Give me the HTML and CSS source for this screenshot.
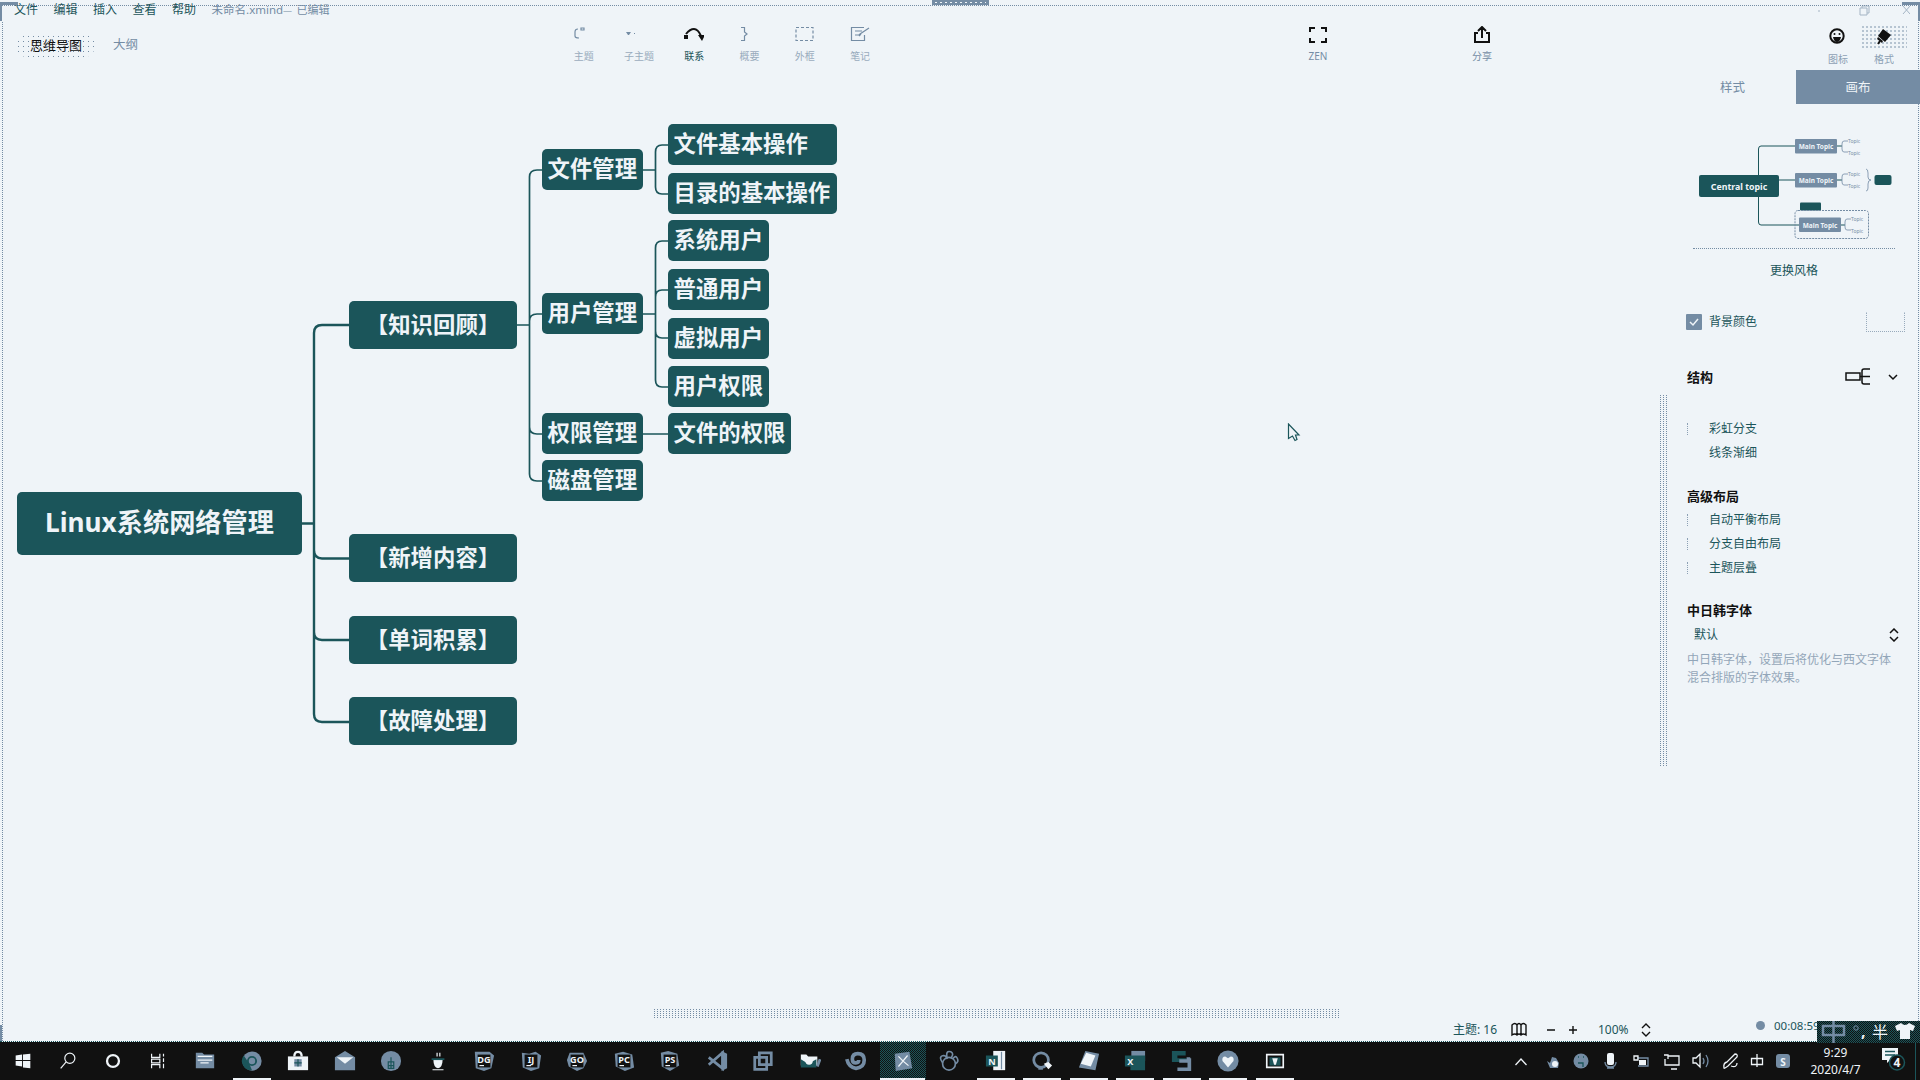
FILE: index.html
```html
<!DOCTYPE html>
<html lang="zh-CN">
<head>
<meta charset="utf-8">
<title>未命名.xmind</title>
<link rel="stylesheet" href="styles.css">
</head>
<body>
<div class="screen">
  <div class="window">
    <i class="edge edge-top"></i><i class="edge edge-left"></i><i class="edge edge-right"></i>
    <i class="corner corner-left"></i><i class="corner corner-right"></i><i class="grip"></i><i class="corner-bottom"></i>
    <header class="menubar">
      <span>文件</span><span>编辑</span><span>插入</span><span>查看</span><span>帮助</span>
      <span class="doc">未命名.xmind</span><span class="faint">—</span><span class="saved">已编辑</span>
      <svg class="winctl" width="110" height="14" viewBox="0 0 110 14"><path d="M18 7h2M60 4h7v7h-7zM62 4V2h7v7h-2M103 2l7 8M110 2l-7 8"/></svg>
    </header>
    <div class="toolbar">
      <div class="views"><span class="view active">思维导图</span><span class="view">大纲</span></div>
      <div class="tools">
        <div class="tool off"><svg width="20" height="16" viewBox="0 0 20 16"><path d="M4 3Q1 3 1 6v4q0 2 4 2M7 2h3v2H7z"/></svg><b>主题</b></div>
        <div class="tool off"><svg width="26" height="16" viewBox="0 0 26 16"><path class="solid" d="M0 6h5L3 9H2zM8 7h1v1H8z"/></svg><b>子主题</b></div>
        <div class="tool on"><svg width="20" height="16" viewBox="0 0 20 16"><path class="solid" d="M0 9h4v4H0zM14 9h7l-3 6z"/><path class="thick" d="M2 8Q6 3 10 3t7 7"/></svg><b>联系</b></div>
        <div class="tool off"><svg width="20" height="16" viewBox="0 0 20 16"><path d="M1 1.500h3.500V6L7 8 4.500 10V14.500H1"/></svg><b>概要</b></div>
        <div class="tool off"><svg width="20" height="16" viewBox="0 0 20 16"><path stroke-dasharray="3 2" d="M1 1.500h17v13H1z"/></svg><b>外框</b></div>
        <div class="tool off"><svg width="20" height="16" viewBox="0 0 20 16"><path d="M14 1.500H1.500v13h13V9M5 5h7M5 9h4l1-1 9-6M9 10l2-2"/></svg><b>笔记</b></div>
      </div>
      <div class="tool wide zen"><svg width="18" height="18" viewBox="0 0 18 18"><path class="thick" d="M1 6V2h5M12 2h5v4M17 12v4h-5M6 16H1v-4"/></svg><b>ZEN</b></div>
      <div class="tool wide share"><svg width="18" height="18" viewBox="0 0 18 18"><path class="thick" d="M5 7H2v9h14V7h-3M9 12V1M5 5l4-4 4 4"/></svg><b>分享</b></div>
      <div class="tool panelbtn"><svg width="46" height="24" viewBox="0 0 46 24"><circle cx="22" cy="11" r="6.700" class="thick"/><circle class="solid" cx="19.500" cy="9" r="1"/><circle class="solid" cx="24.500" cy="9" r="1"/><path class="solid" d="M18 12h8q-1 5-4 5t-4-5"/></svg><b>图标</b></div>
      <div class="tool panelbtn picked"><svg width="46" height="24" viewBox="0 0 46 24"><path class="solid" d="M22 4l8 6-6 7-7-6zM17 12l5 4-1 2-5-4z"/><path class="thick" d="M19 16l-2 3"/></svg><b>格式</b></div>
    </div>
    <main class="work">
      <section class="canvas">
        <svg class="links" width="860" height="700" viewBox="0 70 860 700">
          <path class="l1" d="M302 523.500H314M349 325H322Q314 325 314 333V714Q314 722 322 722H349M314 550Q314 558.500 322 558.500H349M314 632Q314 640 322 640H349"/>
          <path class="l2" d="M517 325H529.500M542 170H537Q529.500 170 529.500 177V474Q529.500 481 537 481H542M529.500 321Q529.500 314 537 314H542M529.500 427Q529.500 434 537 434H542"/>
          <path class="l2" d="M643 170H655.500M668 145H662Q655.500 145 655.500 152V187Q655.500 194 662 194H668M643 314H655.500M668 241H662Q655.500 241 655.500 248V380Q655.500 387 662 387H668M655.500 297Q655.500 290 662 290H668M655.500 331Q655.500 338 662 338H668M643 434H668"/>
        </svg>
        <div class="node root n-root">Linux系统网络管理</div>
        <div class="node main n-review">【知识回顾】</div>
        <div class="node main n-new">【新增内容】</div>
        <div class="node main n-words">【单词积累】</div>
        <div class="node main n-fault">【故障处理】</div>
        <div class="node sub n-file">文件管理</div>
        <div class="node sub n-user">用户管理</div>
        <div class="node sub n-perm">权限管理</div>
        <div class="node sub n-disk">磁盘管理</div>
        <div class="node leaf n-fileop">文件基本操作</div>
        <div class="node leaf n-dirop">目录的基本操作</div>
        <div class="node leaf n-sysuser">系统用户</div>
        <div class="node leaf n-normuser">普通用户</div>
        <div class="node leaf n-virtuser">虚拟用户</div>
        <div class="node leaf n-userperm">用户权限</div>
        <div class="node leaf n-fileperm">文件的权限</div>
        <svg class="cursor" width="14" height="20" viewBox="0 0 14 20"><path d="M1.500 1v14.500l4-2.500 2.500 4.500 2-1-1.500-4.500H12z"/></svg>
        <i class="scroll-v"></i><i class="scroll-h"></i>
      </section>
      <aside class="panel">
        <div class="tabs"><span>样式</span><span class="current">画布</span></div>
        <svg class="preview" width="206" height="110" viewBox="1690 134 206 110">
          <path class="pl" d="M1795 146H1761Q1758.500 146 1758.500 149V222Q1758.500 225 1761 225H1799M1779 180H1795M1837 146h5M1837 180h5M1841 225h4"/>
          <rect class="pt" x="1699" y="175" width="80" height="22" rx="2"/>
          <text x="1739" y="189.500" class="ptxt">Central topic</text>
          <g class="pm"><rect x="1795" y="139" width="42" height="14.500" rx="1"/><rect x="1795" y="173" width="42" height="14.500" rx="1"/><rect x="1799" y="217.500" width="42" height="14.500" rx="1"/></g>
          <text x="1816" y="149" class="pmtxt">Main Topic</text><text x="1816" y="183" class="pmtxt">Main Topic</text><text x="1820" y="227.500" class="pmtxt">Main Topic</text>
          <path class="pb" d="M1848 141h-4q-2 0-2 3v5q0 3 2 3h4M1848 174h-4q-2 0-2 3v5q0 3 2 3h4M1851 219h-4q-2 0-2 3v5q0 3 2 3h4M1866 169q2 0 2 4v4q0 3 3 3-3 0-3 4v4q0 3-2 3"/>
          <g class="ptiny"><text x="1848" y="143">Topic</text><text x="1848" y="155">Topic</text><text x="1848" y="176">Topic</text><text x="1848" y="188">Topic</text><text x="1851" y="221">Topic</text><text x="1851" y="233">Topic</text></g>
          <rect class="pt" x="1874.500" y="175" width="17" height="10" rx="2"/><rect class="pt" x="1800" y="202.500" width="21" height="8" rx="1"/>
          <rect class="pd" x="1795" y="210.500" width="73.500" height="28" rx="3"/>
        </svg>
        <div class="change">更换风格</div>
        <div class="row bg"><svg width="16" height="16" viewBox="0 0 16 16"><rect class="box" width="16" height="16" rx="1"/><path class="tick" d="M4 8l3 3 5-6"/></svg><span>背景颜色</span><i class="swatch"></i></div>
        <div class="row struct"><h3>结构</h3><svg width="60" height="18" viewBox="0 0 60 18"><path d="M1 5h14v7H1zM15 8.500H25M25 1h-6q-2 0-2 2v11q0 2 2 2h6M44 7l4 4 4-4"/></svg></div>
        <label class="opt first"><i></i>彩虹分支</label>
        <label class="opt">线条渐细</label>
        <h3 class="adv">高级布局</h3>
        <label class="opt"><i></i>自动平衡布局</label>
        <label class="opt"><i></i>分支自由布局</label>
        <label class="opt"><i></i>主题层叠</label>
        <h3 class="cjk">中日韩字体</h3>
        <div class="row select"><span>默认</span><svg width="10" height="14" viewBox="0 0 10 14"><path d="M1 5l4-4 4 4M1 9l4 4 4-4"/></svg></div>
        <p>中日韩字体，设置后将优化与西文字体混合排版的字体效果。</p>
      </aside>
    </main>
    <footer class="status">
      <span class="count">主题: 16</span>
      <svg class="map" width="16" height="15" viewBox="0 0 16 15"><path d="M1 3q3-3 5 0 2-3 4 0 2-3 5 0v10q-3-2-5 0-2-2-4 0-2-2-5 0zM6 3v10M10 3v10"/></svg>
      <svg class="zoomctl" width="32" height="12" viewBox="0 0 32 12"><path d="M1 6h8M23 6h8M27 2v8"/></svg>
      <span class="pct">100%</span>
      <svg width="10" height="14" viewBox="0 0 10 14"><path d="M1 5l4-4 4 4M1 9l4 4 4-4"/></svg>
      <i class="rec"></i><span class="timer">00:08:59</span>
    </footer>
    <div class="ime"><svg width="103" height="22" viewBox="0 0 103 22"><path class="zh" d="M6 5h21v9H6zM16.500 0v22"/><circle cx="39" cy="7" r="2.200"/><path class="shirt" d="M78 5l6-3q4 4 8 0l6 3-2 5-3-1v9H83V9l-3 1z"/></svg><span class="comma">,</span><span class="half">半</span></div>
  </div>
  <nav class="taskbar">
    <div class="sys">
      <div class="app"><svg viewBox="0 0 24 24"><path class="w" d="M4 6l7-1v6H4zM12 5l8-1v7h-8zM4 12h7v6l-7-1zM12 12h8v8l-8-1z"/></svg></div>
      <div class="app"><svg viewBox="0 0 24 24"><circle class="lw thin" cx="14" cy="9" r="5.500"/><path class="lw thin" d="M10 13l-6 7"/></svg></div>
      <div class="app"><svg viewBox="0 0 24 24"><circle class="lw" cx="12" cy="12" r="6.500"/></svg></div>
      <div class="app"><svg viewBox="0 0 24 24"><path class="lw thin" d="M5 4v4h9V4M5 20v-4h9v4M5 10h9v4H5zM18 4v3M18 9v4M18 15v5"/></svg></div>
    </div>
    <div class="apps">
      <div class="app"><svg viewBox="0 0 24 24"><path class="s" d="M2 3h7l2 2h11v15H2z"/><path class="lw thin" d="M4 7h16M4 11h16M7 14h9"/></svg></div>
      <div class="app run"><svg viewBox="0 0 24 24"><circle class="s" cx="12" cy="12" r="10.500"/><path class="t" d="M3 6l6 9 3 7A10 10 0 0 1 3 6"/><circle class="lt" cx="12" cy="12" r="4.500"/></svg></div>
      <div class="app"><svg viewBox="0 0 24 24"><path class="w" d="M1 7h22v15H1z"/><path class="lw" d="M8 7q0-5 4-5t4 5"/><path class="s" d="M8 10h8v8H8z"/><path class="lt thin" d="M12 10v8M8 14h8"/></svg></div>
      <div class="app"><svg viewBox="0 0 24 24"><path class="s" d="M1 8L12 1l11 7v14H1z"/><path class="w" d="M3 8h18l-9 7z"/></svg></div>
      <div class="app"><svg viewBox="0 0 24 24"><circle class="s" cx="12" cy="12" r="11"/><path class="lt thin" d="M9 13h6v7H9zM12 8v12M9 17h6"/></svg></div>
      <div class="app"><svg viewBox="0 0 24 24"><path class="w" d="M7 11h10q0 8-5 9-5-1-5-9zM6 21h12v1H6z"/><path class="lt" d="M5 10h14"/><path class="lw thin" d="M11 3v4M14 3v4"/></svg></div>
      <div class="app"><svg viewBox="0 0 24 24"><path class="s" d="M2 2h16l5 4-3 14-8 3-9-3z"/><path class="k" d="M5 5h14v14H5z"/><text x="12" y="14">DG</text><path class="lw thin" d="M7 17h5"/></svg></div>
      <div class="app"><svg viewBox="0 0 24 24"><path class="s" d="M2 3l8 1 7-2 6 4-2 14-9 3-9-4z"/><path class="k" d="M5 5h14v14H5z"/><text x="12" y="14">IJ</text><path class="lw thin" d="M7 17h5"/></svg></div>
      <div class="app"><svg viewBox="0 0 24 24"><path class="s" d="M4 3h15l4 9-4 8-7 3-9-5-2-7z"/><path class="k" d="M5 5h14v14H5z"/><text x="12" y="14">GO</text><path class="lw thin" d="M7 17h5"/></svg></div>
      <div class="app"><svg viewBox="0 0 24 24"><path class="s" d="M2 4l9-2 10 3 2 14-10 4-10-5z"/><path class="k" d="M5 5h14v14H5z"/><text x="12" y="14">PC</text><path class="lw thin" d="M7 17h5"/></svg></div>
      <div class="app"><svg viewBox="0 0 24 24"><path class="s" d="M2 3l8-2 10 3 2 13-10 6-9-5z"/><path class="k" d="M5 5h14v14H5z"/><text x="12" y="14">PS</text><path class="lw thin" d="M7 17h5"/></svg></div>
      <div class="app"><svg viewBox="0 0 24 24"><path class="ls" d="M3 8l15 12V3L3 16"/><path class="s" d="M17 1l6 3v16l-6 3z"/></svg></div>
      <div class="app"><svg viewBox="0 0 24 24"><path class="ls" d="M8 3h13v13H8zM3 8h13v13H3z"/></svg></div>
      <div class="app"><svg viewBox="0 0 24 24"><path class="w" d="M2 5h6l2 2h10v10H2z"/><path class="t" d="M2 10l8 5 9-5v9H2z"/><circle class="w" cx="11" cy="12" r="4"/><path class="ls" d="M23 10l-3 8"/></svg></div>
      <div class="app"><svg viewBox="0 0 24 24"><path class="ls fat" d="M2 10q2 9 10 10 9-1 9-9 0-7-7-7-6 0-6 6 0 4 4 4 3 0 3-3"/></svg></div>
      <div class="app run focus"><svg viewBox="0 0 24 24"><path class="s" d="M3 4l16-2 3 18-18 3z"/><path class="lw thin" d="M7 7l5 5 5-6M7 18l5-6 6 5"/></svg></div>
      <div class="app"><svg viewBox="0 0 24 24"><circle class="ls thin2" cx="12" cy="15" r="7"/><path class="ls thin2" d="M10 9Q8 0 14 2q4 2 0 7M5 14q-5-7 1-8 3 0 4 4M16 10q3-5 5-1t-2 6"/></svg></div>
      <div class="app run"><svg viewBox="0 0 24 24"><path class="w" d="M9 1h13v21H9z"/><path class="t" d="M1 6h13v12H1z"/><text x="7.500" y="16">N</text><path class="ls thin" d="M18 2v19"/></svg></div>
      <div class="app run"><svg viewBox="0 0 24 24"><circle class="ls" cx="11" cy="11" r="8"/><path class="w" d="M14 15l5-2 4 4-4 4z"/><path class="ls" d="M8 20h5"/></svg></div>
      <div class="app run"><svg viewBox="0 0 24 24"><path class="s" d="M8 1l15 3-4 18-18-3z"/><path class="w" d="M9 3l10 3-5 12-11-3z"/></svg></div>
      <div class="app run"><svg viewBox="0 0 24 24"><path class="s" d="M8 1h15v11H8z"/><path class="t" d="M1 6h22v16H7V18H1z"/><text x="7" y="16">X</text></svg></div>
      <div class="app run"><svg viewBox="0 0 24 24"><path class="t" d="M1 1h15v5H7v3h10v4H1z"/><path class="ls fat" d="M9 12h10V8M20 9v12H7"/></svg></div>
      <div class="app run"><svg viewBox="0 0 24 24"><circle class="s" cx="12" cy="12" r="11.500"/><path class="w" d="M12 19l-6-7q-1-5 3-5l3 2 3-2q4 0 3 5z"/></svg></div>
      <div class="app run"><svg viewBox="0 0 24 24"><path class="lw thin2" d="M3 5h18v14H3z"/><path class="t" d="M6 8h12v9H6z"/><path class="w" d="M9 9h6l-2 7h-2z"/></svg></div>
    </div>
    <div class="tray">
      <svg width="280" height="24" viewBox="1515 1049 280 24">
        <path class="lw thin" d="M1515.500 1065l5.500-6 5.500 6"/>
        <path class="s" d="M1547 1061l3 2 2-6 4 1 3 5-1 5h-8z"/><circle class="w" cx="1555" cy="1064" r="3"/>
        <circle class="s" cx="1581" cy="1061" r="7.500"/><path class="lt thin" d="M1578 1063h5v4M1578 1057h1M1583 1057h1"/>
        <rect class="w" x="1607" y="1053" width="7" height="12" rx="2"/><path class="ls thin" d="M1605 1062q0 5 5.500 5t5.500-5M1607 1068h7"/>
        <path class="ls thin" d="M1637 1058h11v8h-10"/><rect class="w" x="1639" y="1060" width="7" height="5"/><path class="lw thin" d="M1634 1056h4v4h-4z"/>
        <path class="lw thin" d="M1668 1056h11v9h-14v-6M1671 1069h6M1664 1055h4v4"/>
        <path class="lw thin" d="M1693 1058h3l4-4v13l-4-4h-3z"/><path class="ls thin" d="M1703 1058q2 3 0 6M1706 1055q4 6 0 12"/>
        <path class="lw thin" d="M1724 1068q-1-5 3-6l8-8q3 0 2 3l-9 9q-4 3-4 2M1731 1066q6 2 6-3"/>
        <path class="lw thin" d="M1751.500 1058.500h11v6h-11zM1757 1054v13"/>
        <rect class="s" x="1776" y="1054" width="14" height="14" rx="3"/><text x="1783" y="1066">S</text>
      </svg>
      <div class="clock"><span>9:29</span><span>2020/4/7</span></div>
      <svg class="notice" width="24" height="26" viewBox="0 0 24 26"><path class="w" d="M0 1h16v12H8l-3 3v-3H0z"/><path class="lt thin" d="M3 4.500h10M3 8h10"/><circle class="badge" cx="15" cy="15.500" r="7.500"/><text x="15" y="20">4</text></svg>
    </div>
  </nav>
</div>
</body>
</html>
```

FILE: styles.css
```css
:root { --bg: #eff4f8; --slate: #748ca4; --teal: #1b555a; --ink: #111; }
* { box-sizing: border-box; }
body { margin: 0; background: var(--bg); color: var(--teal); font-family: "Noto Sans", "Noto Sans CJK SC", sans-serif; font-size: 12px; line-height: 1; overflow: hidden; }
svg { display: block; flex: none; fill: none; stroke: none; }
h3, p { margin: 0; }
.screen { width: 1920px; height: 1080px; display: flex; flex-direction: column; }
.window { position: relative; height: 1042px; display: flex; flex-direction: column; border-bottom: 1px dotted var(--teal); }

/* window frame */
.edge, .corner, .grip, .corner-bottom { position: absolute; }
.edge-top { left: 0; right: 0; top: 5px; height: 1px; background: repeating-linear-gradient(90deg, var(--slate) 0 1px, transparent 1px 2px); }
.edge-left, .edge-right { top: 22px; bottom: 0; width: 1px; background: repeating-linear-gradient(var(--slate) 0 1px, transparent 1px 2px); }
.edge-left { left: 2px; }
.edge-right { right: 1px; z-index: 2; }
.corner { top: 2px; width: 18px; height: 19px; border-top: 3px solid var(--slate); }
.corner-left { left: 0; border-left: 2px solid var(--slate); }
.corner-right { right: 0; border-right: 2px solid var(--slate); }
.corner-bottom { left: 0; bottom: 0; width: 2px; height: 16px; background: var(--slate); }
.grip { left: 932px; top: 0; width: 57px; height: 5px; background: repeating-linear-gradient(90deg, var(--bg) 0 2px, transparent 2px 5px) 3px 2px / 51px 1px no-repeat var(--slate); }

.menubar { height: 20px; padding: 4px 0 0 14px; display: flex; gap: 15.500px; align-items: flex-start; white-space: nowrap; }
.menubar .doc { width: 67px; margin-right: -11px; font-size: 11.500px; }
.menubar .doc, .menubar .faint, .menubar .saved { color: var(--slate); }
.menubar .saved { margin-left: -10px; font-size: 11px; }
.menubar .faint { width: 8px; font-size: 9px; line-height: 13px; }
.menubar .winctl { margin: 0 10px 0 auto; stroke: var(--slate); opacity: .6; }

.toolbar { height: 50px; display: flex; }
.views { width: 556px; padding: 14px 0 0 16px; display: flex; gap: 18px; align-items: flex-start; font-size: 13px; }
.view { height: 23px; line-height: 22px; font-size: 12.500px; color: var(--slate); }
.view.active { width: 79px; font-size: 13px; padding-left: 14px; color: var(--ink); border-radius: 11px; background: radial-gradient(circle, var(--slate) .6px, transparent .8px) 0 0 / 5px 5px; }
.tools { display: flex; width: 332px; margin-right: 400px; }
.tool { display: flex; flex-direction: column; align-items: center; width: 55.300px; padding-top: 6px; stroke: var(--ink); }
.tool b { font-weight: 400; font-size: 10px; line-height: 12px; margin-top: 8px; color: var(--slate); stroke: none; }
.tool svg { stroke: var(--ink); stroke-width: 1.200; }
.tool.off svg { stroke: var(--slate); }
.tool.off b { opacity: .7; }
.tool.off .solid { fill: var(--slate); }
.tool.on b { color: var(--teal); }
.tool .solid { fill: var(--ink); stroke: none; }
.tool .thick { stroke-width: 2; }
.wide { width: 60px; }
.wide b { margin-top: 6px; }
.share { margin-left: 104px; margin-right: 303px; }
.panelbtn { width: 46px; padding-top: 5px; }
.panelbtn b { margin-top: 4px; opacity: .8; }
.picked svg { background: radial-gradient(circle, var(--slate) .6px, transparent .8px) 0 0 / 4px 4px; }

.work { height: 946px; display: flex; }
.canvas { position: relative; width: 1686px; }
.links { position: absolute; left: 0; top: 0; stroke: var(--teal); }
.l1 { stroke-width: 2.400; }
.l2 { stroke-width: 1.700; }
.node { position: absolute; background: var(--teal); color: var(--bg); font-weight: 700; font-size: 22.400px; height: 41px; line-height: 40px; border-radius: 5px; white-space: nowrap; }
.root { width: 285px; height: 63px; line-height: 61px; font-size: 26.200px; text-align: center; }
.main { left: 349px; width: 168px; height: 48px; line-height: 47px; text-align: center; }
.sub { left: 542px; width: 101px; padding-left: 5.500px; }
.leaf { left: 668px; width: 101px; padding-left: 5.500px; }
.n-root { left: 17px; top: 422px; }
.n-review { top: 231px; } .n-new { top: 464.500px; } .n-words { top: 546px; } .n-fault { top: 627.500px; }
.n-file { top: 79px; } .n-user { top: 223.500px; } .n-perm { top: 343.500px; } .n-disk { top: 390.500px; }
.n-fileop { top: 54.500px; width: 169px; } .n-dirop { top: 103.500px; width: 169px; }
.n-sysuser { top: 150.500px; } .n-normuser { top: 199px; } .n-virtuser { top: 248px; } .n-userperm { top: 296.500px; }
.n-fileperm { top: 343.500px; width: 123px; }
.cursor { position: absolute; left: 1287px; top: 353px; fill: var(--bg); stroke: var(--teal); stroke-width: 1.200; }
.scroll-v, .scroll-h { position: absolute; }
.scroll-v { left: 1660px; top: 325px; width: 8px; height: 371px; background: linear-gradient(var(--slate) 0 0) 0 0 / 1px 1px; background: conic-gradient(from 270deg at 1px 1px, var(--slate) 90deg, transparent 0) 0 0 / 3px 2px; }
.scroll-h { left: 654px; top: 939px; width: 685px; height: 9px; background: conic-gradient(from 270deg at 1px 1px, var(--slate) 90deg, transparent 0) 0 0 / 3px 2px; }

.panel { width: 234px; padding-right: 2px; display: flex; flex-direction: column; }
.tabs { display: flex; height: 34px; line-height: 35px; font-size: 12.500px; text-align: center; color: var(--slate); }
.tabs span { width: 92px; margin-left: 0; }
.tabs .current { width: 124px; margin-left: 18px; margin-right: -2px; background: var(--slate); color: var(--bg); }
.tabs span:first-child { padding-left: 1px; margin-left: 0; }
.preview { margin: 30px 0 0 4px; overflow: visible; }
.preview text { text-anchor: middle; font-weight: 700; fill: var(--bg); }
.preview .ptxt { font-size: 8.800px; }
.preview .pmtxt { font-size: 6.500px; }
.preview .ptiny text { font-size: 5px; font-weight: 400; text-anchor: start; fill: var(--slate); }
.pt { fill: var(--teal); } .pm { fill: var(--slate); }
.pl { stroke: var(--teal); } .pb { stroke: var(--slate); stroke-width: .8; } .pd { stroke: var(--slate); stroke-dasharray: 2 1; }
.change { margin: 4px 23px 0 7px; height: 44px; line-height: 43px; text-align: center; border-top: 1px dotted var(--slate); }
.row { display: flex; align-items: center; }
.bg { margin-top: 20px; height: 20px; padding-right: 13px; }
.bg span { margin-left: 7px; }
.box { fill: var(--slate); } .tick { stroke: var(--bg); stroke-width: 1.500; }
.swatch { margin-left: auto; width: 39px; height: 20px; border: 1px dotted var(--slate); border-top-color: transparent; opacity: .7; }
h3 { margin-left: 1px; font-size: 13px; line-height: 20px; color: var(--ink); font-weight: 600; }
.struct { height: 20px; margin-top: 35px; justify-content: space-between; padding-right: 13px; }
.struct svg { stroke: var(--ink); stroke-width: 1.500; }
.opt { position: relative; height: 24.300px; line-height: 24px; padding-left: 23px; }
.opt i { position: absolute; left: 1px; top: 6px; width: 14px; height: 12px; border-left: 1px dotted var(--slate); opacity: .8; }
.first { margin-top: 30px; }
.adv { margin-top: 20px; height: 22px; }
.cjk { margin-top: 20px; height: 22px; }
.select { height: 26px; padding: 0 19px 0 8px; justify-content: space-between; }
.select svg, .status svg { stroke: var(--ink); stroke-width: 1.500; }
.panel p { margin: 3px 0 0 1px; width: 206px; line-height: 18px; color: var(--slate); opacity: .75; }

.status { height: 26px; padding-left: 1453px; display: flex; align-items: center; padding-top: 3px; white-space: nowrap; }
.count { width: 58px; }
.zoomctl { margin-left: 19px; }
.pct { margin-left: 20px; width: 43px; }
.rec { margin-left: 105px; width: 9px; height: 9px; border-radius: 50%; background: var(--slate); margin-top: -8px; }
.timer { margin: -8px 0 0 9px; font-size: 11.500px; }
.status svg { stroke-width: 1.400; }
.ime { position: absolute; left: 1817px; top: 1021px; width: 103px; height: 22px; z-index: 3; color: var(--bg); background: repeating-conic-gradient(var(--teal) 0 25%, var(--ink) 0 50%) 0 0 / 2px 2px; }
.ime svg { stroke: var(--slate); }
.ime .zh { stroke-width: 2.500; } .ime .shirt { fill: var(--bg); stroke: none; }
.ime span { position: absolute; font-size: 16px; line-height: 20px; }
.comma { left: 44px; top: 0; font-weight: 700; } .half { left: 55px; top: 1px; }

.taskbar { height: 38px; background: var(--ink); display: flex; }
.sys, .apps { display: flex; }
.sys .app { width: 45px; }
.apps { margin-left: 2px; }
.app { width: 46.500px; height: 38px; padding-top: 8px; display: flex; justify-content: center; }
.app svg { width: 22px; height: 22px; }
.run { background: linear-gradient(var(--bg) 0 0) 50% 100% / 38px 2px no-repeat; }
.focus { background: linear-gradient(var(--bg) 0 0) 50% 100% / 45px 2px no-repeat, repeating-conic-gradient(var(--teal) 0 25%, var(--ink) 0 50%) 0 0 / 2px 2px; }
.w { fill: var(--bg); } .s { fill: var(--slate); } .t { fill: var(--teal); } .k { fill: var(--ink); }
.lw { stroke: var(--bg); stroke-width: 2.500; } .ls { stroke: var(--slate); stroke-width: 3; } .lt { stroke: var(--teal); stroke-width: 2; }
.thin { stroke-width: 1.300; } .thin2 { stroke-width: 1.800; } .fat { stroke-width: 4; }
.taskbar text { fill: var(--bg); font-size: 10px; font-weight: 700; text-anchor: middle; }
.tray { margin-left: auto; padding-right: 4px; display: flex; border-right: 1px solid var(--teal); margin-right: 4px; color: var(--bg); }
.tray svg { margin-top: 7px; }
.clock { width: 81px; display: flex; flex-direction: column; text-align: center; font-size: 12px; line-height: 17px; padding-top: 2px; }
.tray .notice { margin: 5px 5px 0 6px; }
.tray .notice text { font-size: 12px; }
.badge { fill: var(--ink); stroke: var(--teal); stroke-width: 1.500; }
```
